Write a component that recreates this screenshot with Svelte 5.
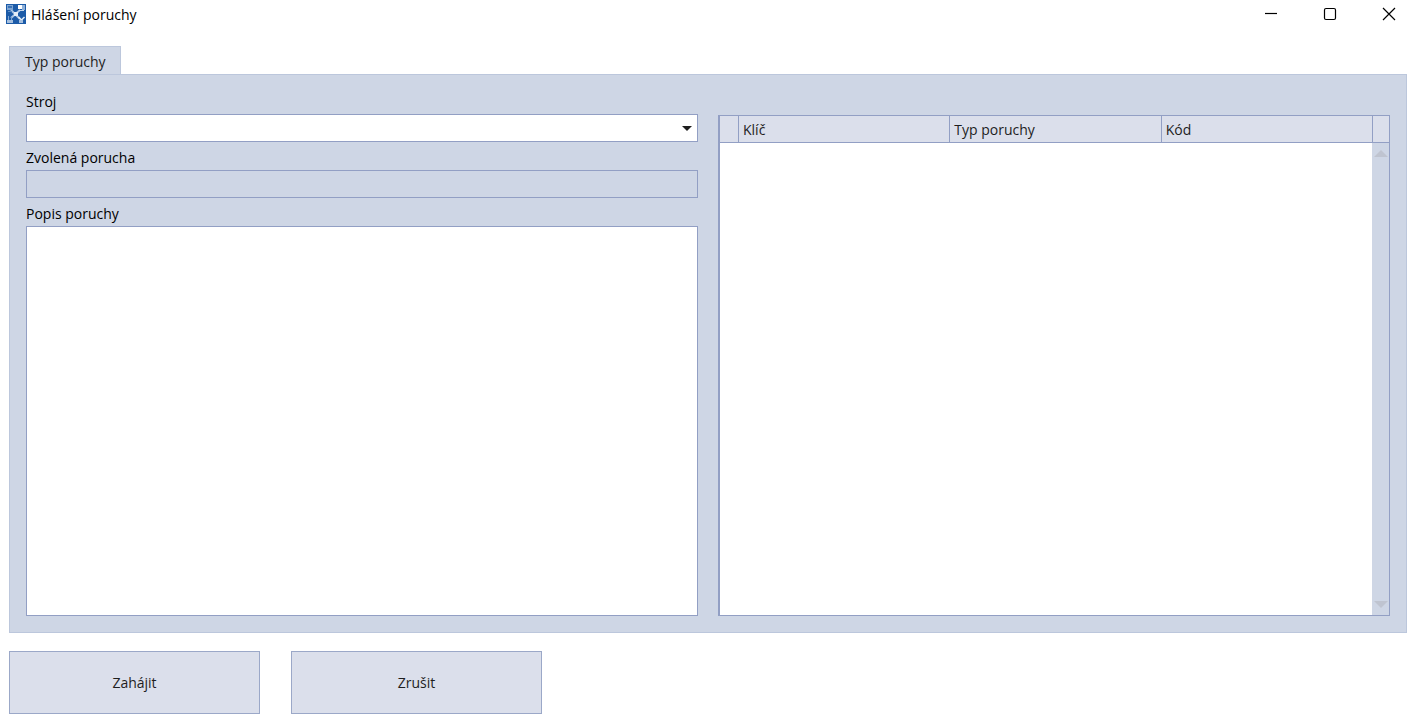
<script>
  const columns = ['Klíč', 'Typ poruchy', 'Kód'];
  let machine = $state('');
  let fault = $state('');
  let description = $state('');
</script>

<div class="window">
  <header class="titlebar">
    <svg class="logo" width="20" height="20" viewBox="0 0 20 20" aria-hidden="true">
      <rect width="20" height="20" fill="#1c5ba8" />
      <path d="M5 6l9 9M14 6l-9 8" stroke="#a9c4e4" stroke-width="2" />
      <rect x="8" y="8" width="4" height="4" fill="#e4edf7" />
      <rect x="1" y="1" width="6" height="5" fill="#7ea5d2" />
      <rect x="2" y="2" width="4" height="2" fill="#3a72b6" />
      <path d="M2 7.500h4" stroke="#5c8dc6" />
      <rect x="12" y="1" width="4" height="4" fill="#fff" />
      <rect x="16" y="1" width="3" height="5" fill="#8fb0d8" />
      <path d="M13 6.500h5" stroke="#c5d7ec" />
      <path d="M2.500 12v4M5.500 13v3" stroke="#7ea5d2" />
      <rect x="1" y="16" width="6" height="3" fill="#a5bfde" />
      <path d="M12.500 13l3 3 3-3" fill="none" stroke="#e4edf7" stroke-width="1.500" />
      <rect x="13" y="16" width="4" height="3" fill="#a5bfde" />
    </svg>
    <h1>Hlášení poruchy</h1>
    <div class="controls">
      <button aria-label="Minimalizovat">
        <svg width="14" height="14" viewBox="0 0 14 14"><path d="M1 6.500h12" /></svg>
      </button>
      <button aria-label="Maximalizovat">
        <svg width="14" height="14" viewBox="0 0 14 14"><rect x="1.500" y="1.500" width="11" height="11" rx="1.500" /></svg>
      </button>
      <button aria-label="Zavřít">
        <svg width="14" height="14" viewBox="0 0 14 14"><path d="M1 1l12 12M13 1L1 13" /></svg>
      </button>
    </div>
  </header>

  <main>
    <div class="tabs" role="tablist">
      <button class="tab" role="tab" id="tab-type" aria-selected="true" aria-controls="panel-type">Typ poruchy</button>
    </div>

    <section class="panel" role="tabpanel" id="panel-type" aria-labelledby="tab-type">
      <div class="form">
        <label for="machine">Stroj</label>
        <div class="combo">
          <select id="machine" bind:value={machine}><option value=""></option></select>
          <svg width="10" height="5" viewBox="0 0 10 5" aria-hidden="true"><path d="M0 0h10L5 5z" fill="#1e1e1e" /></svg>
        </div>
        <label for="fault">Zvolená porucha</label>
        <input id="fault" type="text" readonly bind:value={fault} />
        <label for="description">Popis poruchy</label>
        <textarea id="description" bind:value={description}></textarea>
      </div>

      <div class="grid">
        <table>
          <thead>
            <tr>
              <td class="marker"></td>
              {#each columns as column}
                <th scope="col">{column}</th>
              {/each}
              <td class="corner"></td>
            </tr>
          </thead>
        </table>
        <div class="rows">
          <div class="scrollbar">
            <button aria-label="Nahoru"><svg width="14" height="7" viewBox="0 0 14 7"><path d="M0 7h14L7 0z" /></svg></button>
            <button aria-label="Dolů"><svg width="14" height="7" viewBox="0 0 14 7"><path d="M0 0h14L7 7z" /></svg></button>
          </div>
        </div>
      </div>
    </section>

    <footer>
      <button class="action">Zahájit</button>
      <button class="action">Zrušit</button>
    </footer>
  </main>
</div>

<style>
  :global(body) {
    margin: 0;
    background: #fff;
  }
  .window, .window * {
    box-sizing: border-box;
  }
  .window {
    display: flex;
    flex-direction: column;
    min-height: 100vh;
    font: 14px/20px "Segoe UI", "Open Sans", "Noto Sans", sans-serif;
    color: #1e1e1e;
  }
  button, input, select, textarea {
    font: inherit;
    color: inherit;
    margin: 0;
    border-radius: 0;
  }
  .titlebar {
    display: flex;
    align-items: center;
    height: 28px;
    padding-left: 6px;
  }
  h1 {
    flex: 1;
    margin: 0 0 0 5px;
    padding-top: 2px;
    font-size: 14px;
    font-weight: 400;
    color: #000;
  }
  .controls {
    display: flex;
    align-self: stretch;
  }
  .controls button {
    display: grid;
    place-items: center;
    width: 59px;
    padding: 0 0 0 12px;
    border: 0;
    background: none;
  }
  .controls svg {
    fill: none;
    stroke: #000;
    stroke-width: 1.2;
  }
  main {
    flex: 1;
    display: flex;
    flex-direction: column;
    padding: 18px 5px 11px 9px;
  }
  .tabs {
    display: flex;
  }
  .tab {
    height: 29px;
    padding: 2px 14px 0 15px;
    border: 1px solid #bcc7dc;
    border-bottom: 0;
    background: #ced6e5;
    margin-bottom: -1px;
  }
  .panel {
    flex: 1;
    display: grid;
    grid-template-columns: 1fr 1fr;
    gap: 20px;
    padding: 11px 16px 16px;
    border: 1px solid #bcc7dc;
    background: #ced6e5;
  }
  .form {
    display: flex;
    flex-direction: column;
    color: #000;
  }
  label {
    line-height: 28px;
    padding-top: 2px;
    height: 28px;
  }
  .combo {
    display: grid;
    align-items: center;
  }
  .combo select, .combo svg {
    grid-area: 1 / 1;
  }
  .combo svg {
    justify-self: end;
    margin-right: 6px;
    pointer-events: none;
  }
  select, input, textarea {
    width: 100%;
    height: 28px;
    padding: 0 4px;
    border: 1px solid #929fc4;
    background: #fff;
    appearance: none;
    outline: none;
  }
  input {
    background: #ced6e5;
  }
  textarea {
    flex: 1;
    display: block;
    resize: none;
  }
  .grid {
    display: flex;
    flex-direction: column;
    margin-top: 29px;
    border: 1px solid #929fc4;
    border-left-width: 2px;
    background: #fff;
  }
  table {
    width: 100%;
    table-layout: fixed;
    border-collapse: separate;
    border-spacing: 0;
    background: #dbdfeb;
  }
  th, td {
    height: 27px;
    padding: 1px 4px 0;
    border-right: 1px solid #929fc4;
    border-bottom: 1px solid #929fc4;
    font-weight: 400;
    text-align: left;
  }
  .marker {
    width: 19px;
  }
  .corner {
    width: 16px;
    border-right: 0;
  }
  .rows {
    flex: 1;
    display: flex;
    justify-content: flex-end;
  }
  .scrollbar {
    display: flex;
    flex-direction: column;
    justify-content: space-between;
    width: 17px;
    background: #ced6e5;
  }
  .scrollbar button {
    display: grid;
    place-items: center;
    height: 21px;
    padding: 0;
    border: 0;
    background: none;
  }
  .scrollbar path {
    fill: #bfc4d0;
  }
  footer {
    display: flex;
    gap: 31px;
    margin-top: 18px;
  }
  .action {
    width: 251px;
    height: 63px;
    padding: 0;
    border: 1px solid #9ba8c8;
    background: #dbdfeb;
  }
</style>
